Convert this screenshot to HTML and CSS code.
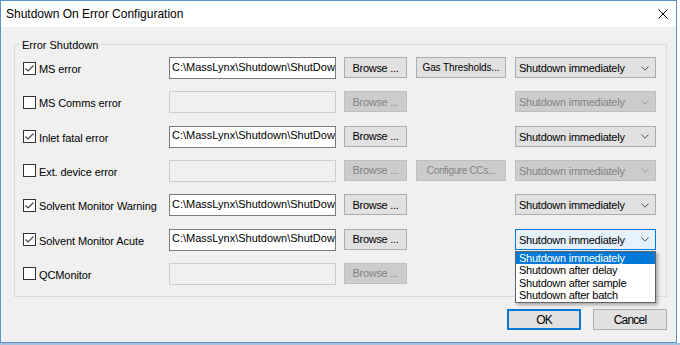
FILE: index.html
```html
<!DOCTYPE html>
<html>
<head>
<meta charset="utf-8">
<link rel="stylesheet" href="styles.css">
</head>
<body>
<div class="window">
  <div class="titlebar">
    <span class="title">Shutdown On Error Configuration</span>
    <svg class="close" viewBox="0 0 10 10"><path d="M0.5 0.5L9.5 9.5M9.5 0.5L0.5 9.5" stroke="#000" stroke-width="1" fill="none"/></svg>
  </div>
  <div class="client">
    <div class="group">
      <span class="legend">Error Shutdown</span>
      <div class="grid">
        <!-- row 1 -->
        <div class="check"><span class="box"><svg viewBox="0 0 11 11"><polyline points="1.5,5.5 4,8 9.5,2.5"/></svg></span><span class="label">MS error</span></div>
        <input class="field" type="text" value="C:\MassLynx\Shutdown\ShutDown.exe" readonly>
        <button class="btn">Browse ...</button>
        <button class="btn wide gas">Gas Thresholds...</button>
        <div class="combo"><span>Shutdown immediately</span><svg class="chev" viewBox="0 0 8 5"><polyline points="0.5,0.5 4,4.2 7.5,0.5"/></svg></div>
        <!-- row 2 -->
        <div class="check"><span class="box"></span><span class="label">MS Comms error</span></div>
        <input class="field" type="text" value="" disabled>
        <button class="btn" disabled>Browse ...</button>
        <div></div>
        <div class="combo disabled"><span>Shutdown immediately</span><svg class="chev" viewBox="0 0 8 5"><polyline points="0.5,0.5 4,4.2 7.5,0.5"/></svg></div>
        <!-- row 3 -->
        <div class="check"><span class="box"><svg viewBox="0 0 11 11"><polyline points="1.5,5.5 4,8 9.5,2.5"/></svg></span><span class="label">Inlet fatal error</span></div>
        <input class="field" type="text" value="C:\MassLynx\Shutdown\ShutDown.exe" readonly>
        <button class="btn">Browse ...</button>
        <div></div>
        <div class="combo"><span>Shutdown immediately</span><svg class="chev" viewBox="0 0 8 5"><polyline points="0.5,0.5 4,4.2 7.5,0.5"/></svg></div>
        <!-- row 4 -->
        <div class="check"><span class="box"></span><span class="label">Ext. device error</span></div>
        <input class="field" type="text" value="" disabled>
        <button class="btn" disabled>Browse ...</button>
        <button class="btn wide cfg" disabled>Configure CCs...</button>
        <div class="combo disabled"><span>Shutdown immediately</span><svg class="chev" viewBox="0 0 8 5"><polyline points="0.5,0.5 4,4.2 7.5,0.5"/></svg></div>
        <!-- row 5 -->
        <div class="check"><span class="box"><svg viewBox="0 0 11 11"><polyline points="1.5,5.5 4,8 9.5,2.5"/></svg></span><span class="label">Solvent Monitor Warning</span></div>
        <input class="field" type="text" value="C:\MassLynx\Shutdown\ShutDown.exe" readonly>
        <button class="btn">Browse ...</button>
        <div></div>
        <div class="combo"><span>Shutdown immediately</span><svg class="chev" viewBox="0 0 8 5"><polyline points="0.5,0.5 4,4.2 7.5,0.5"/></svg></div>
        <!-- row 6 -->
        <div class="check"><span class="box"><svg viewBox="0 0 11 11"><polyline points="1.5,5.5 4,8 9.5,2.5"/></svg></span><span class="label">Solvent Monitor Acute</span></div>
        <input class="field" type="text" value="C:\MassLynx\Shutdown\ShutDown.exe" readonly>
        <button class="btn">Browse ...</button>
        <div></div>
        <div class="combo open"><span>Shutdown immediately</span><svg class="chev" viewBox="0 0 8 5"><polyline points="0.5,0.5 4,4.2 7.5,0.5"/></svg>
          <div class="list">
            <div class="item sel">Shutdown immediately</div>
            <div class="item">Shutdown after delay</div>
            <div class="item">Shutdown after sample</div>
            <div class="item">Shutdown after batch</div>
          </div>
        </div>
        <!-- row 7 -->
        <div class="check"><span class="box"></span><span class="label">QCMonitor</span></div>
        <input class="field" type="text" value="" disabled>
        <button class="btn" disabled>Browse ...</button>
        <div></div>
        <div></div>
      </div>
    </div>
    <div class="actions">
      <button class="btn big default">OK</button>
      <button class="btn big">Cancel</button>
    </div>
  </div>
</div>
<div class="strip"></div>
</body>
</html>
```
FILE: styles.css
```css
html, body {
  margin: 0;
  padding: 0;
  background: #ffffff;
}
body {
  width: 680px;
  height: 345px;
  overflow: hidden;
  font-family: "Liberation Sans", Arial, sans-serif;
  font-size: 11px;
  color: #000;
}
.window {
  width: 677px;
  height: 343px;
  box-sizing: border-box;
  border: 1px solid #5b93cf;
  background: #f0f0f0;
  display: flex;
  flex-direction: column;
}
.titlebar {
  height: 26px;
  flex: none;
  background: #ffffff;
  display: flex;
  align-items: center;
  justify-content: space-between;
  padding: 0 8px 0 5px;
}
.title {
  font-size: 12px;
  line-height: 25px;
  padding-top: 1px;
}
.close {
  width: 10px;
  height: 10px;
  display: block;
}
.client {
  padding: 17px 0 0 13px;
}
.group {
  position: relative;
  width: 653px;
  height: 253px;
  box-sizing: border-box;
  border: 1px solid #dcdcdc;
  padding: 12px 0 0 8px;
}
.legend {
  position: absolute;
  top: -6px;
  left: 5px;
  padding: 0 2px;
  background: #f0f0f0;
  line-height: 13px;
}
.grid {
  display: grid;
  grid-template-columns: 146px 175px 72px 99px 141px;
  grid-auto-rows: 22px;
  row-gap: 12.33px;
  align-items: start;
}
.check {
  display: flex;
  align-items: center;
  height: 22px;
  gap: 3px;
}
.box {
  width: 13px;
  height: 13px;
  box-sizing: border-box;
  border: 1px solid #333333;
  background: #ffffff;
  flex: none;
  display: block;
}
.box svg {
  display: block;
  width: 11px;
  height: 11px;
}
.box polyline {
  fill: none;
  stroke: #444444;
  stroke-width: 1.2;
}
.label {
  padding-top: 3px;
  line-height: 13px;
  letter-spacing: -0.1px;
  white-space: nowrap;
}
.field {
  width: 167px;
  height: 22px;
  box-sizing: border-box;
  border: 1px solid #7a7a7a;
  background: #ffffff;
  margin: 0;
  padding: 0 0 3px 2px;
  font-family: "Liberation Sans", Arial, sans-serif;
  font-size: 11px;
  color: #000;
  outline: none;
}
.field:disabled {
  border-color: #cccccc;
  background: #f0f0f0;
}
.btn {
  width: 63px;
  height: 21px;
  box-sizing: border-box;
  border: 1px solid #adadad;
  background: #e1e1e1;
  margin: 0;
  padding: 0;
  font-family: "Liberation Sans", Arial, sans-serif;
  font-size: 11px;
  letter-spacing: -0.3px;
  color: #000;
  white-space: nowrap;
}
.btn:disabled {
  background: #cccccc;
  border-color: #bfbfbf;
  color: #838383;
}
.btn.wide {
  width: 90px;
  font-size: 10px;
}
.btn.gas {
  letter-spacing: -0.1px;
}
.btn.cfg {
  letter-spacing: -0.35px;
}
.combo {
  position: relative;
  width: 141px;
  height: 21px;
  box-sizing: border-box;
  border: 1px solid #acacac;
  background: #e1e1e1;
  display: flex;
  align-items: center;
  justify-content: space-between;
  padding: 1px 6px 0 3px;
  letter-spacing: -0.25px;
  white-space: nowrap;
}
.chev {
  width: 8px;
  height: 5px;
  display: block;
}
.chev polyline {
  fill: none;
  stroke: #555555;
  stroke-width: 1;
}
.combo.disabled {
  background: #cccccc;
  border-color: #bfbfbf;
  color: #838383;
}
.combo.disabled .chev polyline {
  stroke: #a0a0a0;
}
.combo.open {
  background: #e5f1fb;
  border-color: #0078d7;
}
.list {
  position: absolute;
  left: -1px;
  top: 21px;
  width: 141px;
  box-sizing: border-box;
  border: 1px solid #646464;
  background: #ffffff;
  box-shadow: 2px 2px 3px rgba(0, 0, 0, 0.3);
  z-index: 2;
  color: #000;
}
.item {
  height: 12.5px;
  line-height: 12.5px;
  padding-left: 3px;
}
.item.sel {
  background: #0078d7;
  color: #ffffff;
}
.actions {
  width: 653px;
  margin-top: 12px;
  display: flex;
  justify-content: flex-end;
  gap: 12px;
}
.btn.big {
  width: 74px;
  height: 21px;
  font-size: 12px;
  letter-spacing: -0.8px;
}
.btn.default {
  border: 2px solid #0078d7;
}
.strip {
  width: 680px;
  height: 2px;
  background: #a9c3df;
}
```
